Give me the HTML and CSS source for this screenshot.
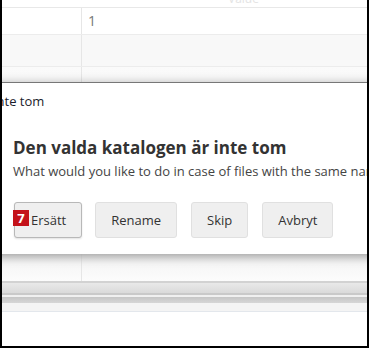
FILE: index.html
```html
<!DOCTYPE html>
<html lang="sv">
<head>
  <meta charset="UTF-8">
  <meta name="viewport" content="width=device-width, initial-scale=1.0">
  <title>Den valda katalogen är inte tom</title>
  <link rel="stylesheet" href="styles.css">
</head>
<body>
  <div class="frame">
    <div class="sheet">
      <div class="sheet-head"><span class="ghost">Value</span></div>
      <div class="row">
        <div class="cell cell-key"></div>
        <div class="cell">1</div>
      </div>
      <div class="row row-alt">
        <div class="cell cell-key"></div>
        <div class="cell"></div>
      </div>
      <div class="row row-hidden">
        <div class="cell cell-key"></div>
        <div class="cell"></div>
      </div>
      <div class="row row-shade">
        <div class="cell cell-key"></div>
        <div class="cell"></div>
      </div>
    </div>

    <!-- scroll / status bars under the grid -->
    <div class="bars">
      <div class="bar bar-top"></div>
      <div class="bar bar-gap"></div>
      <div class="bar bar-low"></div>
      <div class="bar bar-foot"></div>
    </div>

    <!-- modal: lies over the grid -->
    <div class="dialog">
      <div class="dialog-title">Den valda katalogen är inte tom</div>
      <div class="dialog-body">
        <h2>Den valda katalogen är inte tom</h2>
        <p>What would you like to do in case of files with the same name?</p>
        <div class="actions">
          <button class="btn btn-focus"><span class="badge">7</span>Ersätt</button>
          <button class="btn">Rename</button>
          <button class="btn">Skip</button>
          <button class="btn">Avbryt</button>
        </div>
      </div>
    </div>
  </div>
</body>
</html>
```

FILE: styles.css
```css
body {
  margin: 0;
  padding: 0;
  font-family: "Open Sans", "Noto Sans", Arial, sans-serif;
  background: #fff;
  overflow: hidden;
}
.frame {
  position: relative;
  width: 369px;
  height: 348px;
  box-sizing: border-box;
  border-left: 2px solid #000;
  border-right: 2px solid #000;
  border-bottom: 2px solid #000;
  background: #fff;
  overflow: hidden;
}
.sheet {
  display: flex;
  flex-direction: column;
}
.sheet-head {
  height: 7px;
  border-bottom: 1px solid #e8e8e8;
  overflow: hidden;
  position: relative;
}
.ghost {
  display: block;
  margin-left: 226px;
  margin-top: -10px;
  font-size: 12px;
  color: #e4e4e4;
}
.row {
  display: flex;
  height: 31px;
  border-bottom: 1px solid #ececec;
}
.row:nth-child(2) {
  height: 26px;
}
.row-alt {
  background: #f8f8f8;
}
.row-hidden {
  height: 185px;
  background: linear-gradient(#fafafa, #eaeaea);
}
.row-shade {
  height: 28px;
  border-bottom: none;
  background: linear-gradient(#e9e9e9, #f6f6f6 40%, #fcfcfc);
}
.cell {
  flex: 1;
  box-sizing: border-box;
  padding: 0 6px;
  font-size: 14px;
  line-height: 26px;
  color: #777;
}
.cell-key {
  flex: none;
  width: 80px;
  border-right: 1px solid #e6e6e6;
}
.bars {
  display: flex;
  flex-direction: column;
}
.bar-top {
  height: 10px;
  border-top: 2px solid #d2d2d2;
  border-bottom: 2px solid #c9c9c9;
  background: linear-gradient(#e9e9e9, #dadada);
}
.bar-gap {
  height: 2px;
  background: #f0f0f0;
}
.bar-low {
  height: 6px;
  background: linear-gradient(#c6c6c6, #d6d6d6);
}
.bar-foot {
  height: 8px;
  background: #f4f4f4;
  border-bottom: 1px solid #e3e7ec;
}
/* Modal dialog */
.dialog {
  position: absolute;
  top: 82px;
  left: -200px;
  width: 600px;
  height: 171px;
  background: #fff;
  border-top: 1px solid #777;
  box-shadow: 0 2px 10px rgba(0, 0, 0, 0.35);
}
.dialog-title {
  padding: 0 0 0 49px;
  font-size: 13px;
  line-height: 36px;
  color: #1c1c2c;
  white-space: nowrap;
}
.dialog-body {
  padding: 17px 0 0 211px;
}
.dialog-body h2 {
  margin: 0;
  font-size: 17px;
  font-weight: 700;
  color: #333;
  line-height: 24px;
}
.dialog-body p {
  margin: 2px 0 0;
  font-size: 13px;
  color: #444;
  white-space: nowrap;
  line-height: 18px;
}
.actions {
  display: flex;
  gap: 14px;
  margin: 22px 0 0 1px;
}
.btn {
  position: relative;
  height: 36px;
  padding: 0 15px;
  font-family: inherit;
  font-size: 13px;
  color: #333;
  background: #efefef;
  border: 1px solid #e0e0e0;
  border-radius: 3px;
}
.btn-focus {
  padding-left: 16px;
  margin-right: -1px;
  border-color: #b8b8b8;
  box-shadow: 0 1px 2px rgba(0, 0, 0, 0.12);
}
.badge {
  position: absolute;
  left: -2px;
  top: 7px;
  width: 16px;
  height: 16px;
  background: #c4121a;
  color: #fff;
  font-weight: 700;
  font-size: 13px;
  line-height: 16px;
  text-align: center;
}
```
